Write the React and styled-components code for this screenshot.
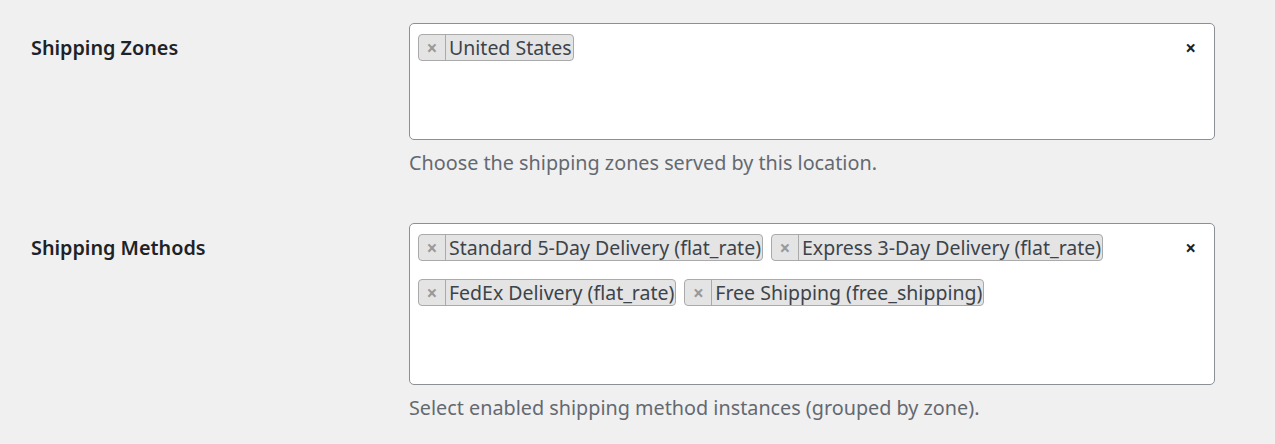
import React from "react";
import styled, { createGlobalStyle } from "styled-components";

const GlobalStyle = createGlobalStyle`
  html, body {
    margin: 0;
    padding: 0;
    background: #f0f0f1;
  }
  body {
    font-family: "Noto Sans", "Open Sans", sans-serif;
    color: #1d2327;
  }
`;

const rows = [
  {
    label: "Shipping Zones",
    height: 117,
    help: "Choose the shipping zones served by this location.",
    chips: ["United States"],
  },
  {
    label: "Shipping Methods",
    height: 162,
    help: "Select enabled shipping method instances (grouped by zone).",
    chips: [
      "Standard 5-Day Delivery (flat_rate)",
      "Express 3-Day Delivery (flat_rate)",
      "FedEx Delivery (flat_rate)",
      "Free Shipping (free_shipping)",
    ],
  },
];

const App = () => {
  return (
    <>
      <GlobalStyle />
      <Page>
        {rows.map((row) => (
          <Row key={row.label}>
            <Label>{row.label}</Label>
            <Field>
              <SelectBox $height={row.height}>
                <Chips>
                  {row.chips.map((chip) => (
                    <Chip key={chip}>
                      <ChipRemove>×</ChipRemove>
                      <ChipText>{chip}</ChipText>
                    </Chip>
                  ))}
                </Chips>
                <ClearAll>×</ClearAll>
              </SelectBox>
              <Help>{row.help}</Help>
            </Field>
          </Row>
        ))}
      </Page>
    </>
  );
};

const Page = styled.div`
  padding-top: 23px;
  display: flex;
  flex-direction: column;
  gap: 46px;
`;

const Row = styled.div`
  display: grid;
  grid-template-columns: 409px 806px;
`;

const Label = styled.div`
  padding-left: 31px;
  padding-top: 11px;
  font-size: 19.8px;
  font-weight: 600;
  line-height: 28px;
  color: #1d2327;
`;

const Field = styled.div`
  display: flex;
  flex-direction: column;
`;

const SelectBox = styled.div`
  box-sizing: border-box;
  height: ${(p) => p.$height}px;
  background: #fff;
  border: 1px solid #8c8f94;
  border-radius: 5px;
  display: flex;
  align-items: flex-start;
  padding: 10px 18px 0 8px;
`;

const Chips = styled.div`
  flex: 1;
  display: flex;
  flex-wrap: wrap;
  column-gap: 8px;
  row-gap: 18px;
`;

const Chip = styled.div`
  display: flex;
  align-items: stretch;
  height: 27px;
  box-sizing: border-box;
  background: #e4e4e4;
  border: 1px solid #aaa;
  border-radius: 4px;
  color: #3c434a;
`;

const ChipRemove = styled.span`
  width: 26px;
  display: flex;
  align-items: center;
  justify-content: center;
  border-right: 1px solid #aaa;
  color: #999;
  font-size: 19px;
  font-weight: 700;
`;

const ChipText = styled.span`
  padding: 0 1px 0 3px;
  font-size: 19.5px;
  line-height: 25px;
  color: #3c434a;
  white-space: nowrap;
`;

const ClearAll = styled.span`
  font-size: 19px;
  font-weight: 700;
  line-height: 27px;
  margin-top: 1px;
  color: #1d2327;
`;

const Help = styled.div`
  margin-top: 9px;
  font-size: 19.8px;
  line-height: 28px;
  color: #646970;
`;

export default App;
